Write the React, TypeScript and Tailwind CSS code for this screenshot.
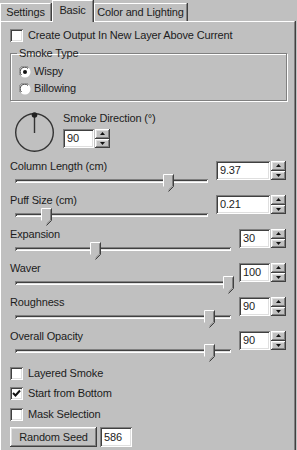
const raised =
  "shadow-[inset_-1px_-1px_#404040,inset_1px_1px_#ffffff,inset_-2px_-2px_#808080,inset_2px_2px_#dfdfdf]";
const sunken =
  "shadow-[inset_1px_1px_#808080,inset_-1px_-1px_#ffffff,inset_2px_2px_#404040,inset_-2px_-2px_#dfdfdf]";

const Checkbox = ({ label, checked = false, h = "h-[20px]" }: { label: string; checked?: boolean; h?: string }) => (
  <div className={`flex items-center gap-[5px] ${h}`}>
    <div className={`w-[13px] h-[13px] bg-white ${sunken} flex items-center justify-center`}>
      {checked && (
        <svg width="9" height="9" viewBox="0 0 9 9">
          <path d="M1 4 L3.5 6.5 L8 1.5" stroke="#111" strokeWidth="2" fill="none" />
        </svg>
      )}
    </div>
    <span>{label}</span>
  </div>
);

const Radio = ({ label, checked = false }: { label: string; checked?: boolean }) => (
  <div className="flex items-center gap-[3px] h-[17px]">
    <svg width="12" height="12" viewBox="0 0 12 12">
      <circle cx="6" cy="6" r="5.5" fill="#fff" />
      <path d="M1.5 9.5 A5.5 5.5 0 0 1 9.5 1.5" stroke="#808080" strokeWidth="1" fill="none" />
      <path d="M2.5 9 A4.5 4.5 0 0 1 9 2.5" stroke="#404040" strokeWidth="1" fill="none" />
      {checked && <circle cx="6" cy="6" r="2" fill="#111" />}
    </svg>
    <span>{label}</span>
  </div>
);

const SpinBox = ({ value, width }: { value: string; width: number }) => (
  <div className="flex items-center gap-[1px]" style={{ width }}>
    <div className={`flex-1 h-[19px] bg-white ${sunken} pl-[4px] flex items-center`}>{value}</div>
    <div className="flex flex-col w-[15px] h-[19px]">
      <div className={`h-[9.5px] bg-[#c0c0c0] ${raised} flex items-center justify-center`}>
        <svg width="5" height="3" viewBox="0 0 5 3">
          <path d="M0 3 L2.5 0 L5 3 Z" fill="#111" />
        </svg>
      </div>
      <div className={`h-[9.5px] bg-[#c0c0c0] ${raised} flex items-center justify-center`}>
        <svg width="5" height="3" viewBox="0 0 5 3">
          <path d="M0 0 L2.5 3 L5 0 Z" fill="#111" />
        </svg>
      </div>
    </div>
  </div>
);

const Slider = ({ pos }: { pos: number }) => (
  <div className="relative h-[20px] ml-[5px]">
    <div className={`absolute left-0 right-0 top-[6px] h-[4px] ${sunken}`} />
    <svg
      className="absolute top-[1px]"
      style={{ left: `calc(${pos * 100}% - 5px)` }}
      width="11"
      height="18"
      viewBox="0 0 11 18"
    >
      <path d="M0.5 0.5 H10.5 V12.5 L5.5 17.5 L0.5 12.5 Z" fill="#c0c0c0" />
      <path d="M0.5 12.5 V0.5 H10" stroke="#fff" fill="none" />
      <path d="M10.5 0.5 V12.5 L5.5 17.5" stroke="#404040" fill="none" />
      <path d="M9.5 1.5 V12.1 L5.5 16" stroke="#808080" fill="none" />
    </svg>
  </div>
);

const SliderRow = ({
  label,
  value,
  pos,
  boxWidth,
  gap,
}: {
  label: string;
  value: string;
  pos: number;
  boxWidth: number;
  gap: number;
}) => (
  <div className="flex items-start h-[34px]" style={{ gap }}>
    <div className="flex-1 pt-[1px]">
      <div className="h-[13px]">{label}</div>
      <Slider pos={pos} />
    </div>
    <div className="mt-[2px] mr-[1px]">
      <SpinBox value={value} width={boxWidth} />
    </div>
  </div>
);

export default function App() {
  return (
    <div
      className="w-[297px] h-[450px] bg-[#c0c0c0] text-[#1c1c1c] text-[11px] leading-[13px] tracking-[-0.15px] overflow-hidden"
      style={{ fontFamily: '"Liberation Sans", Arial, sans-serif' }}
    >
      {/* tabs */}
      <div className="flex items-end h-[21px]">
        <div className="w-[51px] h-[18px] flex items-center justify-center border-t border-l border-white border-r border-r-[#808080] shadow-[1px_0_#404040]">
          Settings
        </div>
        <div className="relative top-[1px] z-10 w-[41px] h-[22px] ml-[1px] pb-[3px] flex items-center justify-center bg-[#c0c0c0] border-t border-l border-white border-r border-r-[#808080] shadow-[1px_0_#404040]">
          Basic
        </div>
        <div className="w-[93px] h-[18px] ml-[1px] flex items-center justify-center border-t border-l border-white border-r border-r-[#808080] shadow-[1px_0_#404040]">
          Color and Lighting
        </div>
      </div>

      {/* panel */}
      <div className="h-[429px] mr-[2px] border-t border-l border-white border-r border-r-[#808080] shadow-[1px_0_#404040] pl-[9px] pr-[7px] pt-[3px]">
        <Checkbox label="Create Output In New Layer Above Current" />

        <fieldset className="mt-[2px] border border-[#808080] shadow-[1px_1px_#ffffff,inset_1px_1px_#ffffff] pl-[8px] pt-[3px] pb-[3px]">
          <legend className="px-[2px] -ml-[2px]">Smoke Type</legend>
          <Radio label="Wispy" checked />
          <Radio label="Billowing" />
        </fieldset>

        <div className="flex items-start mt-[11px] h-[47px]">
          <svg width="40" height="41" viewBox="0 0 40 41" className="ml-[5px]">
            <circle cx="19.5" cy="20.5" r="18.8" stroke="#333" strokeWidth="1.4" fill="none" />
            <line x1="19.5" y1="3" x2="19.5" y2="21" stroke="#333" strokeWidth="1.4" />
            <circle cx="19.5" cy="3" r="2.8" fill="#222" />
          </svg>
          <div className="ml-[8px] flex flex-col gap-[4px]">
            <span>Smoke Direction (°)</span>
            <SpinBox value="90" width={47} />
          </div>
        </div>

        <SliderRow label="Column Length (cm)" value="9.37" pos={0.794} boxWidth={70} gap={8} />
        <SliderRow label="Puff Size (cm)" value="0.21" pos={0.16} boxWidth={70} gap={8} />
        <SliderRow label="Expansion" value="30" pos={0.37} boxWidth={47} gap={8} />
        <SliderRow label="Waver" value="100" pos={0.985} boxWidth={47} gap={8} />
        <SliderRow label="Roughness" value="90" pos={0.9} boxWidth={47} gap={8} />
        <SliderRow label="Overall Opacity" value="90" pos={0.9} boxWidth={47} gap={8} />

        <Checkbox label="Layered Smoke" h="h-[20.5px]" />
        <Checkbox label="Start from Bottom" checked h="h-[20.5px]" />
        <Checkbox label="Mask Selection" h="h-[20.5px]" />

        <div className="flex items-center gap-[3px] mt-[2.5px]">
          <div className={`w-[87px] h-[20px] ${raised} flex items-center justify-center`}>Random Seed</div>
          <div className={`w-[32px] h-[20px] bg-white ${sunken} pl-[4px] flex items-center`}>586</div>
        </div>
      </div>
    </div>
  );
}
